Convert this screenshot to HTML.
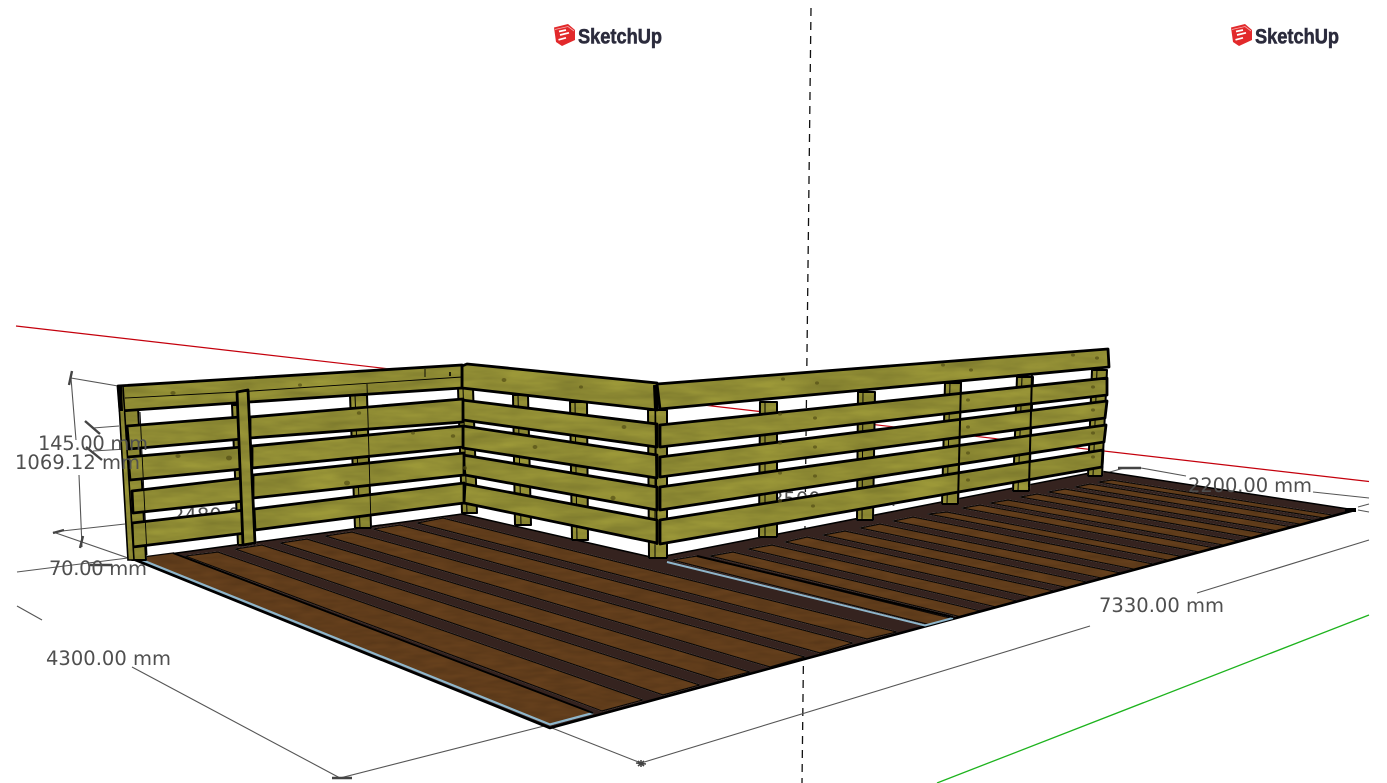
<!DOCTYPE html>
<html><head><meta charset="utf-8"><title>SketchUp deck</title>
<style>html,body{margin:0;padding:0;background:#fff;width:1387px;height:783px;overflow:hidden}svg{display:block}
.d{font-family:"DejaVu Sans","Liberation Sans",sans-serif;font-size:19.5px;fill:#4f4f4f}
.l{font-family:"Liberation Sans",sans-serif;font-weight:700;font-size:21px;fill:#2b2b3c;stroke:#2b2b3c;stroke-width:.55}
.ln{stroke:#555;stroke-width:1.1;fill:none}
.tk{stroke:#444;stroke-width:2.4;fill:none}
.s{fill:#9c9838;stroke:#000;stroke-width:2.8;stroke-linejoin:round}
.p{fill:#9c9838;stroke:#000;stroke-width:2;stroke-linejoin:round}
.pl{fill:#66401c;stroke:#0b0705;stroke-width:1.2;stroke-linejoin:round}
.k{fill:#544f16;opacity:.7}
</style></head><body>
<svg width="1387" height="783" viewBox="0 0 1387 783" xmlns="http://www.w3.org/2000/svg">
<defs>
<filter id="wood" x="0" y="0" width="1387" height="783" filterUnits="userSpaceOnUse" color-interpolation-filters="sRGB">
<feTurbulence type="fractalNoise" baseFrequency="0.02 0.1" numOctaves="3" seed="4"/>
<feColorMatrix values=".28 0 0 0 .77  .28 0 0 0 .77  .28 0 0 0 .77  0 0 0 0 1"/>
<feComposite in2="SourceAlpha" operator="in"/>
<feBlend in2="SourceGraphic" mode="multiply"/>
</filter>
<filter id="plank" x="0" y="0" width="1387" height="783" filterUnits="userSpaceOnUse" color-interpolation-filters="sRGB">
<feTurbulence type="fractalNoise" baseFrequency="0.04 0.2" numOctaves="2" seed="9"/>
<feColorMatrix values=".22 0 0 0 .83  .22 0 0 0 .83  .22 0 0 0 .83  0 0 0 0 1"/>
<feComposite in2="SourceAlpha" operator="in"/>
<feBlend in2="SourceGraphic" mode="multiply"/>
</filter>
</defs>
<rect width="1387" height="783" fill="#fff"/>

<!-- logos -->
<g>
<polygon points="554,27.5 568,24 575,30 575,40 562,46 556,42" fill="#e2292b"/>
<path d="M555 29.5 L568 26.5 L574 31" stroke="#f6b0b0" stroke-width=".8" fill="none"/>
<path d="M560 35 L569 32.8 M558.5 39.8 L566 37.8 M559 31.5 L566 30" stroke="#fff" stroke-width="1.7" fill="none"/>
<text class="l" x="578" y="43.5" textLength="84" lengthAdjust="spacingAndGlyphs">SketchUp</text>
<polygon points="1231,27.5 1245,24 1252,30 1252,40 1239,46 1233,42" fill="#e2292b"/>
<path d="M1232 29.5 L1245 26.5 L1251 31" stroke="#f6b0b0" stroke-width=".8" fill="none"/>
<path d="M1237 35 L1246 32.8 M1235.5 39.8 L1243 37.8 M1236 31.5 L1243 30" stroke="#fff" stroke-width="1.7" fill="none"/>
<text class="l" x="1255" y="43.5" textLength="84" lengthAdjust="spacingAndGlyphs">SketchUp</text>
</g>

<!-- axes -->
<line x1="16" y1="326" x2="1369" y2="481.5" stroke="#c4000c" stroke-width="1.2"/>
<line x1="937" y1="783" x2="1369" y2="615" stroke="#1db31d" stroke-width="1.3"/>
<line x1="811" y1="8" x2="802" y2="783" stroke="#111" stroke-width="1.3" stroke-dasharray="8 6"/>

<!-- text hidden behind fence -->
<text class="d" x="172" y="522" textLength="125">2480.00 mm</text>
<text class="d" x="771" y="506" textLength="125">3500.00 mm</text>

<!-- dimension lines -->
<g class="ln">
<path d="M17 606 L42 620 M132 667 L340 778 L548 725"/>
<path d="M552 728 L641 763 L1090 626 M1197 593 L1369 540"/>
<path d="M1103 474 L1124 468 M1141 468 L1186 476 M1313 492 L1369 498"/>
<path d="M1358 507 L1369 504 M1358 510 L1369 512"/>
<path d="M71 378 L118 386 M71 378 L76 440 M79 475 L82 547"/>
<path d="M53 532 L128 558 M62 531 L125 524"/>
<path d="M93 428 L119 426 M93 451 L127 449"/>
<path d="M17 572 L128 558"/>
</g>
<g class="tk">
<path d="M332 778 L352 778"/>
<path d="M636 763 L646 764 M641 760 L641 767 M638 761 L644 766 M644 761 L638 766" stroke-width="1.5"/>
<path d="M1118 468 L1141 468"/>
<path d="M72 371 L69 385 M83 536 L80 548"/>
<path d="M85 421 L100 434 M86 447 L102 460"/>
<path d="M53 533 L64 530"/>
<path d="M90 565 L112 565"/>
</g>

<!-- floor -->
<polygon points="133,559 462,514 655,558 1100,471 1355,510 550,728" fill="#35231f" stroke="#000" stroke-width="1.5" stroke-linejoin="round"/>
<g filter="url(#plank)">
<g class="pl">
<polygon points="135,558 173,553 593,713 550,725"/>
<polygon points="185,556 218,552 643,700 602,711"/>
<polygon points="235,549 262,545 700,685 663,695"/>
<polygon points="280,543 307,539 750,672 718,680"/>
<polygon points="325,536 352,532 805,657 770,667"/>
<polygon points="373,529 400,525 853,643 820,653"/>
<polygon points="417,523 443,518 897,632 867,639"/>
<polygon points="672,560 697,556 952.4,618.5 929.5,624.7"/>
<polygon points="710,556 733,552 980.7,610.9 959.4,616.6"/>
<polygon points="748,549 772,545 1017.3,601 995.6,606.9"/>
<polygon points="785,542 807,537 1054.2,591 1031.4,597.2"/>
<polygon points="823,535 845,531 1087.2,582.1 1066.9,587.6"/>
<polygon points="860,528 880,524 1121,573 1101.8,578.2"/>
<polygon points="893,521 913,517 1154,564.1 1134.7,569.3"/>
<polygon points="928,514 947,512 1182.2,556.5 1168.3,560.2"/>
<polygon points="962,508 980,505 1214.3,547.8 1198.7,552"/>
<polygon points="990,503 1008,500 1239.6,541 1224,545.2"/>
<polygon points="1020,497 1037,494 1267,533.6 1252,537.6"/>
<polygon points="1048,492 1065,489 1292,526.8 1277,530.8"/>
<polygon points="1075,487 1090,484 1315.4,520.5 1301,524.3"/>
<polygon points="1098,482 1112,480 1334.6,515.3 1324,518"/>
</g></g>
<!-- thick outline + blue lips -->
<path d="M133 559 L550 728 L1355 510" fill="none" stroke="#000" stroke-width="2.6" stroke-linejoin="round"/>
<path d="M1345 510 L1356 510" stroke="#000" stroke-width="4"/>
<path d="M137 558 L550 724.5 L593 713" fill="none" stroke="#8fb6cb" stroke-width="2.2"/>
<path d="M173 553 L593 713" fill="none" stroke="#000" stroke-width="1.8"/>
<path d="M667 562 L925 625.5 L953 618" fill="none" stroke="#8fb6cb" stroke-width="2"/>
<path d="M697 556 L953 617" fill="none" stroke="#000" stroke-width="2"/>

<!-- fence -->
<g filter="url(#wood)">
<g class="p">
<!-- posts -->
<polygon points="122,388 137,388 146,560 132,560"/>
<polygon points="232,405 243,405 246,545 238,545"/>
<polygon points="350,395 367,395 371,528 355,528"/>
<polygon points="458,388 473,388 477,513 462,513"/>
<polygon points="513,395 528,395 531,525 515,525"/>
<polygon points="570,402 587,402 588,540 572,540"/>
<polygon points="648,410 667,410 667,558 649,558"/>
<polygon points="760,402 777,402 777,537 759,537"/>
<polygon points="858,392 875,392 873,520 857,520"/>
<polygon points="945,383 961,383 958,504 942,504"/>
<polygon points="1017,377 1033,377 1029,491 1013,491"/>
<polygon points="1092,370 1107,370 1102,476 1088,476"/>
</g>
<g fill="none" stroke="#000" stroke-width="1">
<path d="M355 395 L360 528 M463 388 L467 513 M518 395 L521 525 M575 402 L577 540 M655 410 L655 558 M765 402 L765 537 M863 392 L862 520 M950 383 L947 504 M1022 377 L1018 491 M1097 370 L1093 476"/>
</g>
<g class="s">
<!-- section D -->
<polygon points="657,384 1108,349 1109,367 660,409"/>
<polygon points="660,425 1107,378 1107,395 660,447"/>
<polygon points="660,457 1107,401 1105,418 660,477"/>
<polygon points="660,487 1106,425 1104,442 660,510"/>
<polygon points="660,520 1103,450 1102,467 660,544"/>
<!-- section C -->
<polygon points="462,366 467,364 657,383 657,410 462,388"/>
<polygon points="462,400 657,424 657,447 463,420"/>
<polygon points="463,426 657,455 657,478 463,448"/>
<polygon points="463,455 657,487 657,510 465,475"/>
<polygon points="465,484 657,520 657,543 464,503"/>
<!-- section B -->
<polygon points="118,386 462,365 462,388 249,402 120,411"/>
<polygon points="250,417 463,399 463,422 250,438"/>
<polygon points="252,446 463,426 463,447 252,468"/>
<polygon points="253,475 464,453 464,475 253,498"/>
<polygon points="254,509 464,483 464,503 255,530"/>
<!-- section A -->
<polygon points="127,426 240,417 242,439 129,449"/>
<polygon points="128,457 242,447 243,469 130,480"/>
<polygon points="132,491 243,478 244,501 133,513"/>
<polygon points="132,523 245,510 246,533 133,547"/>
<!-- vertical plank -->
<polygon points="237,392 248,390 255,543 243,545"/>
</g>
<!-- left board -->
<polygon points="118,386 123,386 134,560 128,560" fill="#9c9838" stroke="#000" stroke-width="1.6"/>
<polygon points="118,386 122,386 123,411 120,411" fill="#000"/>
</g>
<g fill="none" stroke="#000">
<path d="M125 398 L237 392 L462 377 M425 369 L425 377 M367 384 L371 526 M140 412 L147 555" stroke-width=".9"/>
<path d="M450 372 L450 376" stroke-width="1.6"/>
<path d="M655 385 L657 545" stroke-width="1.6"/>
<path d="M655 385 L656 409" stroke-width="4"/>
<path d="M961 382 L958 503 M1032 373 L1029 487" stroke-width="2"/>
</g>
<!-- knots -->
<g class="k">
<ellipse cx="783" cy="379" rx="2" ry="1.6"/><ellipse cx="817" cy="383" rx="2" ry="1.6"/><ellipse cx="780" cy="414" rx="2" ry="1.6"/><ellipse cx="815" cy="418" rx="2" ry="1.6"/><ellipse cx="780" cy="443" rx="2" ry="1.6"/><ellipse cx="815" cy="447" rx="2" ry="1.6"/><ellipse cx="780" cy="473" rx="2" ry="1.6"/><ellipse cx="815" cy="476" rx="2" ry="1.6"/><ellipse cx="780" cy="501" rx="2" ry="1.6"/><ellipse cx="813" cy="506" rx="2" ry="1.6"/>
<ellipse cx="504" cy="380" rx="2.4" ry="2"/><ellipse cx="581" cy="387" rx="2" ry="1.6"/><ellipse cx="624" cy="427" rx="2.4" ry="2"/><ellipse cx="535" cy="447" rx="2.4" ry="2"/><ellipse cx="613" cy="498" rx="2.6" ry="2.2"/><ellipse cx="465" cy="468" rx="2" ry="2"/>
<ellipse cx="347" cy="483" rx="3" ry="2.4"/><ellipse cx="359" cy="413" rx="2.2" ry="1.8"/><ellipse cx="413" cy="433" rx="2" ry="1.6"/><ellipse cx="453" cy="436" rx="2.2" ry="1.8"/>
<ellipse cx="173" cy="393" rx="2.6" ry="2"/><ellipse cx="178" cy="456" rx="2.6" ry="2"/><ellipse cx="229" cy="458" rx="3" ry="2.4"/><ellipse cx="300" cy="385" rx="2" ry="1.6"/>
<ellipse cx="943" cy="365" rx="2" ry="1.6"/><ellipse cx="971" cy="370" rx="2" ry="1.6"/><ellipse cx="1073" cy="355" rx="2" ry="1.6"/><ellipse cx="1097" cy="358" rx="2" ry="1.6"/><ellipse cx="968" cy="400" rx="2" ry="1.6"/><ellipse cx="1093" cy="387" rx="2" ry="1.6"/><ellipse cx="968" cy="427" rx="2" ry="1.6"/><ellipse cx="1093" cy="410" rx="2" ry="1.6"/><ellipse cx="968" cy="453" rx="2" ry="1.6"/><ellipse cx="1093" cy="433" rx="2" ry="1.6"/><ellipse cx="968" cy="480" rx="2" ry="1.6"/><ellipse cx="1093" cy="457" rx="2" ry="1.6"/>
</g>

<!-- dimension text -->
<g class="d">
<text x="46" y="665" textLength="125">4300.00 mm</text>
<text x="1099" y="612" textLength="125">7330.00 mm</text>
<text x="1188" y="492" textLength="124">2200.00 mm</text>
<text x="38" y="450" textLength="110">145.00 mm</text>
<text x="15" y="469" textLength="125">1069.12 mm</text>
<text x="49" y="575" textLength="98">70.00 mm</text>
</g>
</svg>
</body></html>
